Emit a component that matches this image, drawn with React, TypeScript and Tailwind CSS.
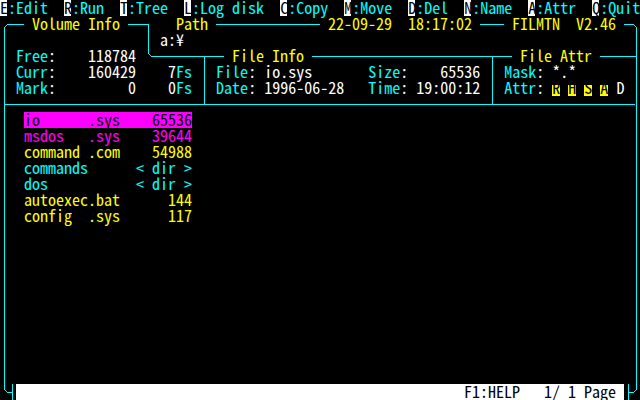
import React from "react";

const CY = "text-[#00ffff]";
const YE = "text-[#ffff00]";
const MA = "text-[#ff00ff]";
const WH = "text-white";

type Rect = [number, number, number, number];

// Box-drawing glyphs on an 8x16 character cell, drawn as pixel runs.
const GLYPHS: Record<string, Rect[]> = {
  "│": [[4, 0, 1, 16]],
  "┐": [[0, 8, 5, 1], [4, 8, 1, 8]],
  "┬": [[0, 8, 8, 1], [4, 8, 1, 8]],
  "┴": [[0, 8, 8, 1], [4, 0, 1, 9]],
  "┤": [[4, 0, 1, 16], [0, 8, 4, 1]],
  "├": [[4, 0, 1, 16], [5, 8, 3, 1]],
  "╭": [[4, 11, 1, 5], [5, 10, 1, 1], [6, 9, 1, 1], [7, 8, 1, 1]],
  "╮": [[4, 11, 1, 5], [3, 10, 1, 1], [2, 9, 1, 1], [0, 8, 2, 1]],
  "╰": [[4, 0, 1, 6], [5, 6, 1, 1], [6, 7, 1, 1], [7, 8, 1, 1]],
  "╯": [[4, 0, 1, 6], [3, 6, 1, 1], [2, 7, 1, 1], [0, 8, 2, 1]],
};

function Box({ g }: { g: string }) {
  return (
    <svg width={8} height={16} viewBox="0 0 8 16" className="block shrink-0" shapeRendering="crispEdges">
      {GLYPHS[g].map(([x, y, w, h], i) => (
        <rect key={i} x={x} y={y} width={w} height={h} fill="#00ffff" />
      ))}
    </svg>
  );
}

function HLine({ className }: { className: string }) {
  return (
    <div className={`h-[16px] shrink-0 ${className}`}>
      <div className="mt-[8px] h-px w-full bg-[#00ffff]" />
    </div>
  );
}

function T({ children, className = "" }: { children: React.ReactNode; className?: string }) {
  return <span className={`block h-[16px] shrink-0 whitespace-pre ${className}`}>{children}</span>;
}

function Row({ children, className = "" }: { children: React.ReactNode; className?: string }) {
  return <div className={`flex h-[16px] shrink-0 ${className}`}>{children}</div>;
}

const MENU: [string, string][] = [
  ["E", ":Edit"],
  ["R", ":Run"],
  ["T", ":Tree"],
  ["L", ":Log disk"],
  ["C", ":Copy"],
  ["M", ":Move"],
  ["D", ":Del"],
  ["N", ":Name"],
  ["A", ":Attr"],
  ["Q", ":Quit"],
];

function MenuBar() {
  return (
    <Row>
      {MENU.map(([key, label], i) => (
        <React.Fragment key={key}>
          <T className="bg-[linear-gradient(to_right,#ffffff_7px,transparent_7px)] text-black">{key}</T>
          <T className={CY}>{label + (i < MENU.length - 1 ? "  " : "")}</T>
        </React.Fragment>
      ))}
    </Row>
  );
}

function Label({ name }: { name: string }) {
  return (
    <>
      <T className={CY}>{name}</T>
      <T className={WH}>:</T>
    </>
  );
}

type FileEntry = { name: string; size: string; tone: string };

const FILES: FileEntry[] = [
  { name: "io      .sys", size: "    65536", tone: "bg-[#ff00ff] text-black" },
  { name: "msdos   .sys", size: "    39644", tone: MA },
  { name: "command .com", size: "    54988", tone: YE },
  { name: "commands    ", size: "  < dir >", tone: CY },
  { name: "dos         ", size: "  < dir >", tone: CY },
  { name: "autoexec.bat", size: "      144", tone: YE },
  { name: "config  .sys", size: "      117", tone: YE },
];

function AttrFlag({ ch }: { ch: string }) {
  return <T className="bg-[linear-gradient(to_bottom,transparent_5px,#ffff00_5px)] text-black">{ch}</T>;
}

export default function App() {
  return (
    <div className="flex h-[400px] w-[640px] flex-col overflow-hidden bg-black font-['Noto_Sans_Mono_CJK_JP','DejaVu_Sans_Mono',monospace] text-[16px] font-light leading-[14px] text-white">
      <MenuBar />

      {/* top frame rule with panel titles, date, time and version */}
      <Row>
        <Box g="╭" />
        <HLine className="w-[16px]" />
        <T className={YE}> Volume Info </T>
        <HLine className="w-[16px]" />
        <Box g="┐" />
        <T className={YE}>{"   Path "}</T>
        <HLine className="w-[104px]" />
        <T className={YE}>{" 22-09-29  18:17:02 "}</T>
        <HLine className="w-[24px]" />
        <T className={YE}>{" FILMTN  V2.46 "}</T>
        <HLine className="w-[8px]" />
        <Box g="╮" />
      </Row>

      <div className="flex h-[352px] shrink-0 flex-col border-x border-[#00ffff] ml-[4px] mr-[3px] pl-[3px] pr-[4px]">
        <Row>
          <T>{"                 "}</T>
          <Box g="│" />
          <T className={WH}>{" a:¥"}</T>
        </Row>

        <Row>
          <T> </T>
          <Label name="Free" />
          <T className={WH}>{"    118784 "}</T>
          <Box g="╰" />
          <HLine className="w-[48px]" />
          <Box g="┬" />
          <HLine className="w-[16px]" />
          <T className={YE}> File Info </T>
          <HLine className="w-[176px]" />
          <Box g="┬" />
          <HLine className="w-[16px]" />
          <T className={YE}> File Attr </T>
          <HLine className="w-[36px]" />
        </Row>

        <Row>
          <T> </T>
          <Label name="Curr" />
          <T className={WH}>{"    160429    7"}</T>
          <T className={CY}>Fs</T>
          <T> </T>
          <Box g="│" />
          <T> </T>
          <Label name="File" />
          <T className={WH}>{" io.sys       "}</T>
          <Label name="Size" />
          <T className={WH}>{"    65536 "}</T>
          <Box g="│" />
          <T> </T>
          <Label name="Mask" />
          <T className={WH}>{" *.*"}</T>
        </Row>

        <Row>
          <T> </T>
          <Label name="Mark" />
          <T className={WH}>{"         0    0"}</T>
          <T className={CY}>Fs</T>
          <T> </T>
          <Box g="│" />
          <T> </T>
          <Label name="Date" />
          <T className={WH}>{" 1996-06-28   "}</T>
          <Label name="Time" />
          <T className={WH}>{" 19:00:12 "}</T>
          <Box g="│" />
          <T> </T>
          <Label name="Attr" />
          <T> </T>
          <AttrFlag ch="R" />
          <T> </T>
          <AttrFlag ch="H" />
          <T> </T>
          <AttrFlag ch="S" />
          <T> </T>
          <AttrFlag ch="A" />
          <T className={WH}> D</T>
        </Row>

        <Row className="-ml-[3px]">
          <HLine className="w-[195px]" />
          <Box g="┴" />
          <HLine className="w-[280px]" />
          <Box g="┴" />
          <HLine className="w-[139px]" />
        </Row>

        {FILES.map((f) => (
          <Row key={f.name}>
            <T>{"  "}</T>
            <T className={f.tone}>{f.name + f.size}</T>
          </Row>
        ))}
      </div>

      {/* bottom frame edge around the status line */}
      <Row>
        <Box g="╰" />
        <Box g="┤" />
        <div className="flex h-[16px] w-[608px] shrink-0 justify-end bg-white">
          <T className="text-black">{"F1:HELP   1/ 1 Page "}</T>
        </div>
        <Box g="├" />
        <Box g="╯" />
      </Row>
    </div>
  );
}
